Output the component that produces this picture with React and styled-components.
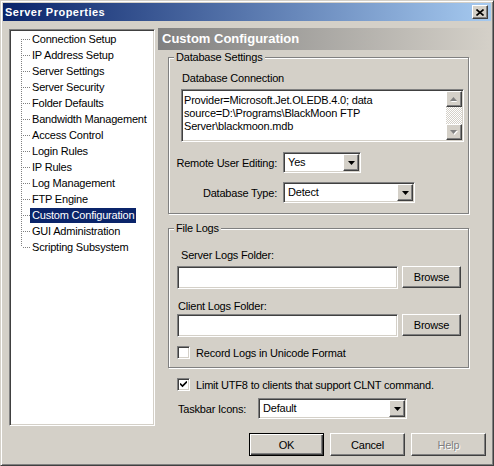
import styled, { createGlobalStyle } from 'styled-components'

const GlobalStyle = createGlobalStyle`
  body {
    margin: 0;
    font-family: "Liberation Sans", Arial, sans-serif;
    font-size: 11px;
  }
`

const raised = `
  border: 1px solid;
  border-color: #fff #404040 #404040 #fff;
  box-shadow: inset -1px -1px #808080;
  background: #d4d0c8;
`

const sunken = `
  border: 1px solid;
  border-color: #808080 #fff #fff #808080;
  box-shadow: inset 1px 1px #404040, inset -1px -1px #d4d0c8;
  background: #fff;
`

const Window = styled.div`
  width: 494px;
  height: 466px;
  box-sizing: border-box;
  background: #d4d0c8;
  border: 1px solid;
  border-color: #d4d0c8 #404040 #404040 #d4d0c8;
  box-shadow: inset 1px 1px #fff, inset -1px -1px #808080;
  padding: 2px;
  display: flex;
  flex-direction: column;
  color: #000;
  font-family: "Liberation Sans", Arial, sans-serif;
  font-size: 11px;
  letter-spacing: -0.2px;
`

const TitleBar = styled.div`
  flex: none;
  height: 18px;
  display: flex;
  align-items: center;
  justify-content: space-between;
  padding: 0 3px 0 2px;
  background: linear-gradient(90deg, #0a246a, #a6caf0);
`

const Title = styled.span`
  color: #fff;
  font-weight: bold;
  font-size: 11px;
  letter-spacing: 0.5px;
`

const CloseButton = styled.div`
  ${raised}
  width: 16px;
  height: 14px;
  box-sizing: border-box;
  display: flex;
  align-items: center;
  justify-content: center;
`

const Body = styled.div`
  flex: none;
  display: flex;
  gap: 3px;
  padding: 8px 2px 0 6px;
`

const Tree = styled.div`
  ${sunken}
  width: 146px;
  height: 397px;
  box-sizing: border-box;
  padding: 1px 0 0 11px;
`

const TreeRow = styled.div`
  display: flex;
  align-items: center;
  height: 16px;
`

const TreeLabel = styled.span`
  padding: 0 2px;
  line-height: 15px;
  white-space: nowrap;
  background: ${p => (p.$selected ? '#0a246a' : 'transparent')};
  color: ${p => (p.$selected ? '#fff' : '#000')};
`

const Pane = styled.div`
  flex: 1;
  display: flex;
  flex-direction: column;
  margin-top: -1px;
`

const Header = styled.div`
  height: 22px;
  line-height: 22px;
  padding-left: 4px;
  color: #fff;
  font-weight: bold;
  font-size: 13px;
  letter-spacing: 0;
  background: linear-gradient(90deg, #808080, #d4d0c8);
`

const Group = styled.fieldset`
  margin: ${p => p.$top}px 0 0 10px;
  padding: 0;
  width: 301px;
  min-width: 0;
  box-sizing: border-box;
  border: 1px solid #808080;
  box-shadow: 1px 1px #fff, inset 1px 1px #fff;
`

const Legend = styled.legend`
  margin-left: 5px;
  padding: 0 2px;
  line-height: 13px;
  background: #d4d0c8;
`

const GroupBody = styled.div`
  padding: ${p => p.$pad};
`

const Label = styled.div`
  line-height: 13px;
  padding-left: ${p => p.$indent || 0}px;
  margin: ${p => p.$margin || '0'};
  white-space: nowrap;
`

const TextBox = styled.div`
  ${sunken}
  display: flex;
  width: 283px;
  height: 53px;
  box-sizing: border-box;
  padding: 1px;
`

const TextContent = styled.div`
  flex: 1;
  padding: 3px 2px 0 1px;
  line-height: 13px;
  word-break: break-word;
`

const ScrollBar = styled.div`
  width: 16px;
  display: flex;
  flex-direction: column;
  background: repeating-conic-gradient(#fff 0 25%, #d4d0c8 0 50%) 0 0 / 2px 2px;
`

const ScrollButton = styled.div`
  ${raised}
  width: 16px;
  height: 16px;
  box-sizing: border-box;
  display: flex;
  align-items: center;
  justify-content: center;
`

const ScrollTrack = styled.div`
  flex: 1;
`

const FormGrid = styled.div`
  display: grid;
  grid-template-columns: 96px auto;
  column-gap: 6px;
  row-gap: 9px;
  margin-top: 10px;
  align-items: center;
  justify-items: start;
`

const FieldLabel = styled.span`
  justify-self: end;
  white-space: nowrap;
`

const Combo = styled.div`
  ${sunken}
  width: ${p => p.$width}px;
  height: 21px;
  box-sizing: border-box;
  padding: 1px;
  display: flex;
  align-items: stretch;
`

const ComboValue = styled.span`
  flex: 1;
  padding-left: 3px;
  line-height: 17px;
`

const DropButton = styled.div`
  ${raised}
  width: 16px;
  box-sizing: border-box;
  display: flex;
  align-items: center;
  justify-content: center;
`

const PathRow = styled.div`
  display: flex;
  gap: 4px;
  margin-top: ${p => p.$top}px;
`

const PathInput = styled.div`
  ${sunken}
  width: 221px;
  height: 23px;
  box-sizing: border-box;
`

const Button = styled.div`
  ${raised}
  width: ${p => p.$width}px;
  height: ${p => p.$height}px;
  box-sizing: border-box;
  display: flex;
  align-items: center;
  justify-content: center;
  ${p => p.$default && `
    border: 1px solid #000;
    box-shadow: inset 1px 1px #fff, inset -1px -1px #404040, inset -2px -2px #808080;
  `}
  ${p => p.$disabled && `
    color: #808080;
    text-shadow: 1px 1px #fff;
  `}
`

const CheckRow = styled.div`
  display: flex;
  align-items: center;
  gap: 6px;
  margin: ${p => p.$margin};
`

const CheckBox = styled.span`
  ${sunken}
  width: 13px;
  height: 13px;
  box-sizing: border-box;
  display: flex;
  align-items: center;
  justify-content: center;
`

const TaskbarRow = styled.div`
  display: flex;
  align-items: center;
  margin: 7px 0 0 20px;
`

const TaskbarLabel = styled.span`
  width: 80px;
`

const ButtonRow = styled.div`
  display: flex;
  justify-content: flex-end;
  gap: 6px;
  margin-top: 7px;
  padding-right: 5px;
`

const treeItems = [
  'Connection Setup',
  'IP Address Setup',
  'Server Settings',
  'Server Security',
  'Folder Defaults',
  'Bandwidth Management',
  'Access Control',
  'Login Rules',
  'IP Rules',
  'Log Management',
  'FTP Engine',
  'Custom Configuration',
  'GUI Administration',
  'Scripting Subsystem',
]

const Connector = ({ first, last }) => (
  <svg width="9" height="16" viewBox="0 0 9 16" style={{ flex: 'none' }}>
    <line x1="0.5" y1={first ? 8 : 0} x2="0.5" y2={last ? 8 : 16} stroke="#808080" strokeDasharray="1 1" />
    <line x1="2" y1="8.5" x2="9" y2="8.5" stroke="#808080" strokeDasharray="1 1" />
  </svg>
)

const DownArrow = () => (
  <svg width="7" height="4" viewBox="0 0 7 4">
    <path d="M0 0h7L3.5 4z" fill="#000" />
  </svg>
)

const UpArrow = () => (
  <svg width="8" height="5" viewBox="0 0 8 5">
    <path d="M1 5h6L4 1z" fill="#fff" />
    <path d="M0 4h7L3.5 0z" fill="#808080" />
  </svg>
)

const DisabledDown = () => (
  <svg width="8" height="5" viewBox="0 0 8 5">
    <path d="M1 1h7L4.5 5z" fill="#fff" />
    <path d="M0 0h7L3.5 4z" fill="#808080" />
  </svg>
)

const CheckMark = () => (
  <svg width="7" height="7" viewBox="0 0 7 7">
    <path d="M0 2.5l2.5 2.5L7 0.5" fill="none" stroke="#000" strokeWidth="1.6" />
  </svg>
)

const CloseIcon = () => (
  <svg width="8" height="7" viewBox="0 0 8 7">
    <path d="M0.5 0.5l7 6M7.5 0.5l-7 6" stroke="#000" strokeWidth="1.6" />
  </svg>
)

const App = () => (
  <Window>
    <GlobalStyle />
    <TitleBar>
      <Title>Server Properties</Title>
      <CloseButton><CloseIcon /></CloseButton>
    </TitleBar>
    <Body>
      <Tree>
        {treeItems.map((item, i) => (
          <TreeRow key={item}>
            <Connector first={i === 0} last={i === treeItems.length - 1} />
            <TreeLabel $selected={item === 'Custom Configuration'}>{item}</TreeLabel>
          </TreeRow>
        ))}
      </Tree>
      <Pane>
        <Header>Custom Configuration</Header>
        <Group $top={1}>
          <Legend>Database Settings</Legend>
          <GroupBody $pad="8px 4px 10px 12px">
            <Label $indent={1} $margin="0 0 4px">Database Connection</Label>
            <TextBox>
              <TextContent>
                Provider=Microsoft.Jet.OLEDB.4.0; data source=D:\Programs\BlackMoon FTP Server\blackmoon.mdb
              </TextContent>
              <ScrollBar>
                <ScrollButton><UpArrow /></ScrollButton>
                <ScrollTrack />
                <ScrollButton><DisabledDown /></ScrollButton>
              </ScrollBar>
            </TextBox>
            <FormGrid>
              <FieldLabel>Remote User Editing:</FieldLabel>
              <Combo $width={78}>
                <ComboValue>Yes</ComboValue>
                <DropButton><DownArrow /></DropButton>
              </Combo>
              <FieldLabel>Database Type:</FieldLabel>
              <Combo $width={132}>
                <ComboValue>Detect</ComboValue>
                <DropButton><DownArrow /></DropButton>
              </Combo>
            </FormGrid>
          </GroupBody>
        </Group>
        <Group $top={8}>
          <Legend>File Logs</Legend>
          <GroupBody $pad="14px 4px 8px 8px">
            <Label $indent={4}>Server Logs Folder:</Label>
            <PathRow $top={4}>
              <PathInput />
              <Button $width={59} $height={22}>Browse</Button>
            </PathRow>
            <Label $indent={1} $margin="11px 0 0">Client Logs Folder:</Label>
            <PathRow $top={1}>
              <PathInput />
              <Button $width={59} $height={22}>Browse</Button>
            </PathRow>
            <CheckRow $margin="9px 0 0">
              <CheckBox />
              <span>Record Logs in Unicode Format</span>
            </CheckRow>
          </GroupBody>
        </Group>
        <CheckRow $margin="10px 0 0 19px">
          <CheckBox><CheckMark /></CheckBox>
          <span>Limit UTF8 to clients that support CLNT command.</span>
        </CheckRow>
        <TaskbarRow>
          <TaskbarLabel>Taskbar Icons:</TaskbarLabel>
          <Combo $width={149}>
            <ComboValue>Default</ComboValue>
            <DropButton><DownArrow /></DropButton>
          </Combo>
        </TaskbarRow>
      </Pane>
    </Body>
    <ButtonRow>
      <Button $width={75} $height={23} $default>OK</Button>
      <Button $width={75} $height={23}>Cancel</Button>
      <Button $width={75} $height={23} $disabled>Help</Button>
    </ButtonRow>
  </Window>
)

export default App
